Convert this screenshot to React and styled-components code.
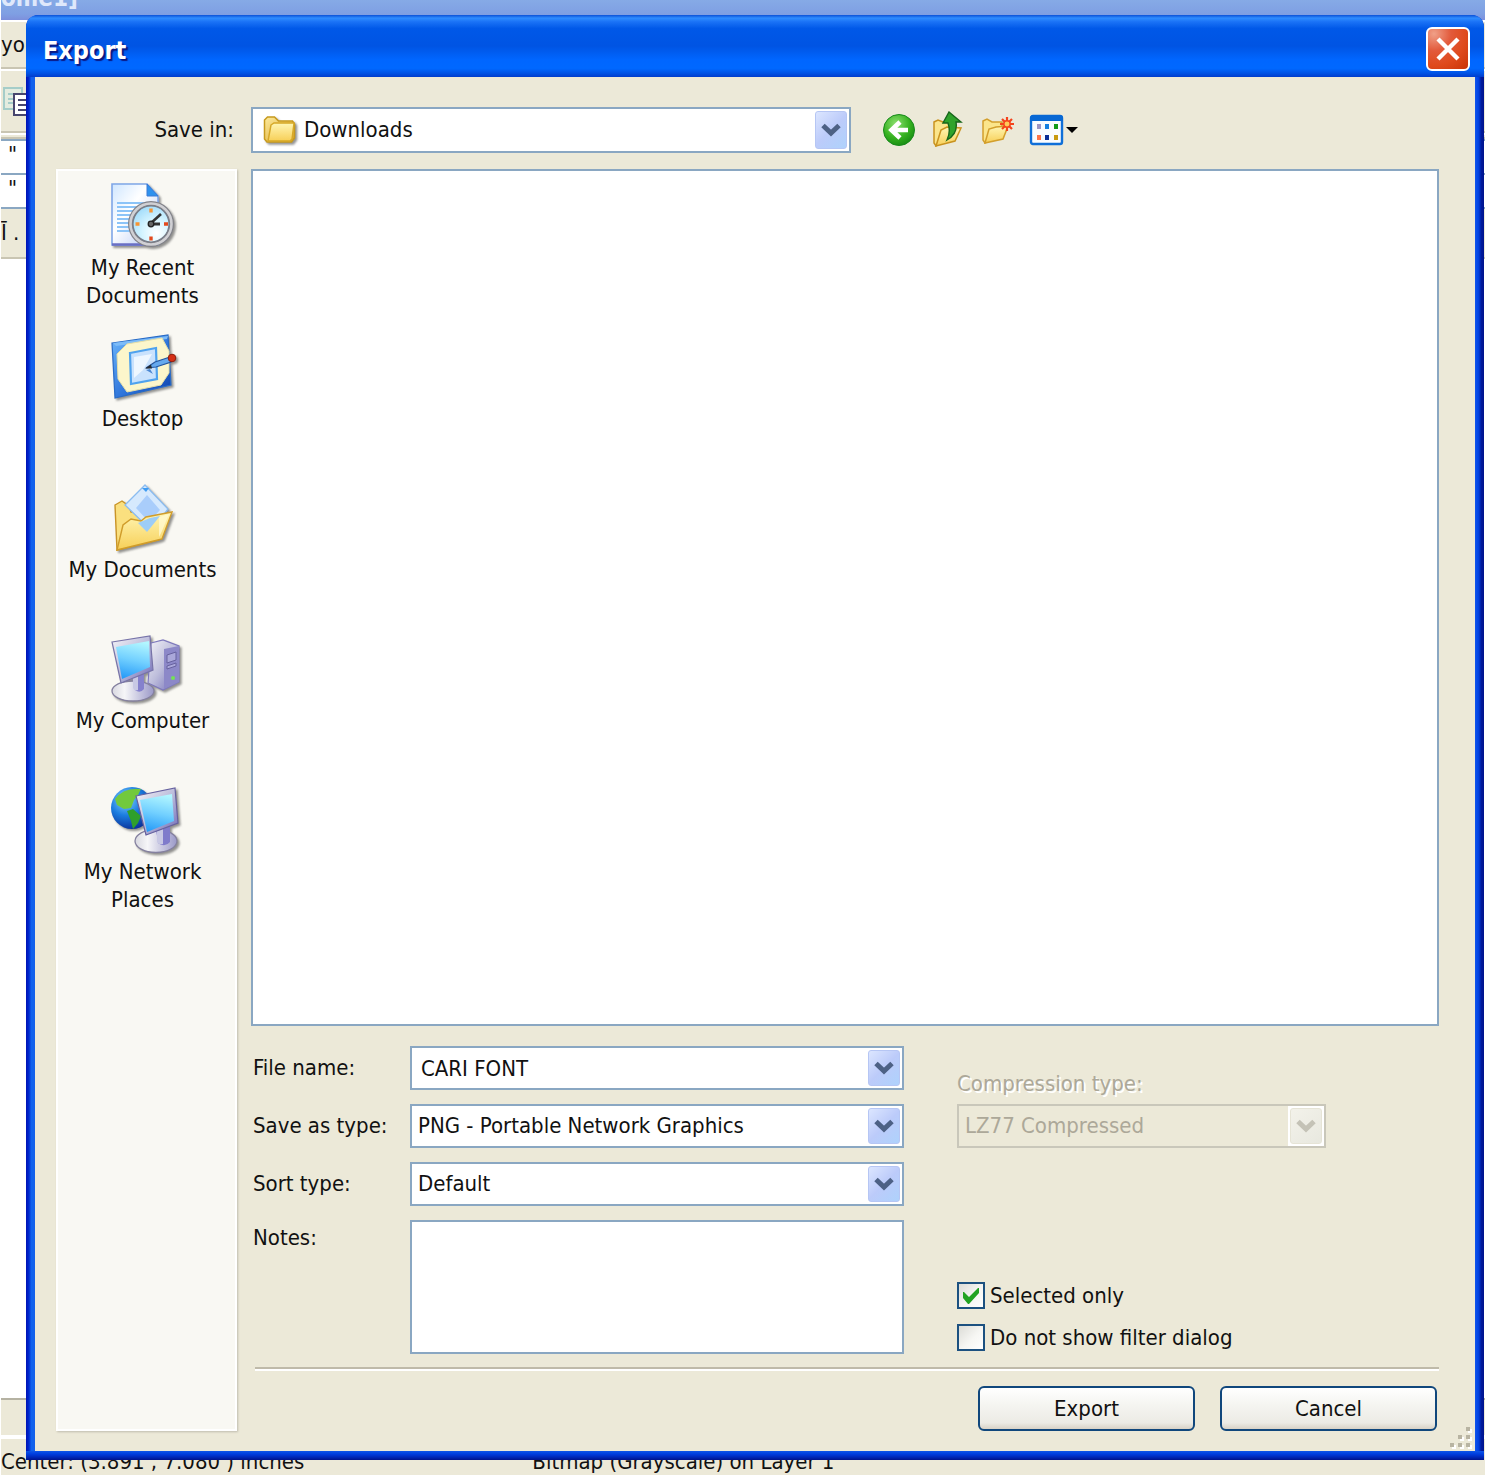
import React, { useId, useState } from "react";
import styled, { createGlobalStyle } from "styled-components";

const Global = createGlobalStyle`
  *, *::before, *::after { box-sizing: border-box; }
  body { margin: 0; background: #fff; }
  body, button, input, select, textarea {
    font-family: "DejaVu Sans Condensed", "DejaVu Sans", sans-serif;
    font-stretch: condensed;
    font-size: 22px;
    line-height: 28px;
    color: #111;
  }
`;

/* ---------- application behind the dialog ---------- */

const Desktop = styled.div`
  position: relative;
  min-height: 100vh;
  display: flex;
  flex-direction: column;
  overflow: hidden;
  padding: 0 0 2px 1px;
`;

const AppTitle = styled.div`
  flex: none;
  height: 20px;
  padding-bottom: 6px;
  display: flex;
  align-items: flex-end;
  overflow: hidden;
  background: linear-gradient(#86aae6, #7f9fe3 70%, #7d8fdc);
  color: #dfe8fb;
  font-size: 24px;
  font-weight: bold;
  line-height: 32px;
`;

const AppBar = styled.div`
  flex: none;
  height: ${(p) => p.$height}px;
  display: flex;
  align-items: center;
  overflow: hidden;
  white-space: nowrap;
  background: #ece9d8;
  border-top: 2px solid ${(p) => p.$top || "#fff"};
  border-bottom: ${(p) => p.$edge || 2}px solid ${(p) => p.$bottom || "#c9c5b2"};
`;

const AppField = styled.div`
  flex: none;
  height: 34px;
  padding-left: 7px;
  background: #fff;
  border-top: 2px solid #8aa7c2;
`;

const AppCanvas = styled.div`
  flex: 1;
  background: #fff;
`;

const StatusBar = styled.div`
  flex: none;
  height: 36px;
  display: flex;
  align-items: flex-end;
  gap: 228px;
  overflow: hidden;
  white-space: nowrap;
  line-height: 26px;
  background: #ece9d8;
`;

/* ---------- dialog frame ---------- */

const Dialog = styled.section`
  position: absolute;
  inset: 15px 1px 17px 26px;
  display: flex;
  flex-direction: column;
  padding: 0 9px 9px;
  border-radius: 12px 12px 0 0;
  background:
    linear-gradient(#0f55e6, #0040e0 30%, #0030c8 55%, #00138c) bottom / 100% 9px no-repeat,
    linear-gradient(90deg, #0012b4, #0028cf 30%, #0f62ee 60%, #1460ea) left / 9px 100% no-repeat,
    linear-gradient(90deg, #0f55ee, #0040e0 40%, #001a9c 70%, #00138c) right / 9px 100% no-repeat,
    #0040e0;
`;

const TitleBar = styled.header`
  flex: none;
  height: 62px;
  margin: 0 -9px;
  padding: 0 14px 0 17px;
  display: flex;
  align-items: center;
  justify-content: space-between;
  border-radius: 12px 12px 0 0;
  background: linear-gradient(#0a50d8, #2f8cff 5%, #1a72f6 11%, #0058e8 22%, #0054e3 50%, #0066ff 72%, #0068ff 86%, #0052e4 94%, #003ccc);
`;

const Title = styled.h1`
  margin: 0;
  padding-top: 10px;
  color: #fff;
  font-size: 25px;
  line-height: 32px;
  font-weight: bold;
  text-shadow: 2px 2px 1px #0a1883;
`;

const CloseButton = styled.button`
  width: 44px;
  height: 44px;
  margin-top: 5px;
  padding: 0;
  display: grid;
  place-items: center;
  border: 2px solid #fff;
  border-radius: 6px;
  background: radial-gradient(circle at 15% 12%, #f0a088, #e2593a 35%, #df4a1c 65%, #c93408);
`;

const Body = styled.div`
  position: relative;
  flex: 1;
  display: grid;
  grid-template-columns: 181px minmax(0, 1fr);
  grid-template-rows: 46px minmax(0, 1fr);
  gap: 16px 14px;
  padding: 30px 36px 20px 21px;
  background: #ece9d8;
`;

const SaveInLabel = styled.label`
  align-self: center;
  justify-self: end;
  padding-right: 3px;
`;

const LocationRow = styled.div`
  display: flex;
  align-items: center;
  gap: 31px;
`;

const Tools = styled.div`
  display: flex;
  gap: 15px;
`;

const ToolButton = styled.button`
  padding: 0;
  height: 38px;
  display: flex;
  align-items: center;
  border: 0;
  background: none;
`;

/* ---------- places ---------- */

const Places = styled.nav`
  display: flex;
  flex-direction: column;
  padding: 11px 8px 0 0;
  border: 2px solid #fff;
  background: #f9f8f3;
  box-shadow: 1px 1px 2px #bfbcae;
`;

const Place = styled.button`
  height: 151px;
  padding: 0;
  display: flex;
  flex-direction: column;
  align-items: center;
  gap: 4px;
  border: 0;
  background: none;
  svg { overflow: visible; }
`;

const PlaceLabel = styled.span`
  white-space: pre;
`;

/* ---------- files and form ---------- */

const Main = styled.main`
  display: flex;
  flex-direction: column;
`;

const FileList = styled.div`
  flex: 1;
  min-height: 200px;
  margin-bottom: 20px;
  border: 2px solid #8aa7c2;
  background: #fff;
`;

const Form = styled.div`
  display: grid;
  grid-template-columns: 159px minmax(0, 494px) minmax(0, 369px);
  grid-template-rows: 44px 44px 44px 134px;
  row-gap: 14px;
`;

const FieldLabel = styled.label`
  grid-column: 1;
  align-self: ${(p) => (p.$top ? "start" : "center")};
  padding: ${(p) => (p.$top ? "4px" : "0")} 0 0 2px;
  white-space: nowrap;
`;

const ComboFrame = styled.div`
  display: grid;
  grid-template-columns: minmax(0, 1fr);
  align-items: center;
  flex: ${(p) => p.$flex || "none"};
  height: ${(p) => p.$height || 44}px;
  border: 2px solid ${(p) => (p.$disabled ? "#c9c7ba" : "#8aa7c2")};
  background: ${(p) => (p.$disabled ? "#ece9d8" : "#fff")};
  & > * { grid-area: 1 / 1; }
`;

const Select = styled.select`
  appearance: none;
  width: 100%;
  height: 100%;
  padding: 0 40px 0 ${(p) => p.$indent || 6}px;
  border: 0;
  outline: 0;
  background: transparent;
  opacity: 1;
  &:disabled { color: #aca899; }
`;

const TextInput = styled.input`
  width: 100%;
  height: 100%;
  padding: 0 40px 0 9px;
  border: 0;
  outline: 0;
  background: transparent;
`;

const Arrow = styled.span`
  justify-self: end;
  align-self: stretch;
  width: 36px;
  padding: 2px;
  display: grid;
  pointer-events: none;
  background: #fff;
  & > span {
    display: grid;
    place-items: center;
    border: 1px solid ${(p) => (p.$disabled ? "#e6e4d6" : "#b6c6f4")};
    border-radius: 3px;
    background: ${(p) =>
      p.$disabled
        ? "linear-gradient(135deg, #f3f2ea, #e8e8df)"
        : "linear-gradient(135deg, #dce6ff, #bccbfa 50%, #aed2fc)"};
  }
`;

const LeadIcon = styled.span`
  justify-self: start;
  display: flex;
  padding-left: 10px;
  pointer-events: none;
`;

const Notes = styled.textarea`
  grid-column: 2;
  width: 100%;
  height: 100%;
  padding: 4px 8px;
  resize: none;
  border: 2px solid #8aa7c2;
  outline: 0;
  background: #fff;
`;

const Options = styled.div`
  grid-column: 3;
  grid-row: 1 / 5;
  display: flex;
  flex-direction: column;
  margin-left: 53px;
  margin-right: -53px;
  padding: 24px 0 3px;
`;

const DisabledLabel = styled.label`
  margin-bottom: 6px;
  color: #aca899;
  text-shadow: 2px 2px 0 #fff;
`;

const Checks = styled.div`
  margin-top: auto;
  display: flex;
  flex-direction: column;
  gap: 15px;
`;

const CheckRow = styled.label`
  display: flex;
  align-items: center;
  gap: 5px;
  height: 27px;
  white-space: nowrap;
`;

const CheckFrame = styled.span`
  display: grid;
  place-items: center;
  width: 28px;
  height: 27px;
  & > * { grid-area: 1 / 1; }
  & > svg { pointer-events: none; }
`;

const Checkbox = styled.input`
  appearance: none;
  width: 100%;
  height: 100%;
  margin: 0;
  border: 2px solid #1c5180;
  background: linear-gradient(135deg, #dcdcd7, #f6f6f3 55%, #fff);
`;

const Divider = styled.hr`
  align-self: stretch;
  height: 4px;
  margin: 13px 0 15px 4px;
  border: 0;
  border-top: 2px solid #bfbaa9;
  border-bottom: 2px solid #fff;
`;

const Actions = styled.div`
  display: flex;
  justify-content: flex-end;
  gap: 25px;
  padding-right: 2px;
`;

const ActionButton = styled.button`
  width: 217px;
  height: 45px;
  padding: 0;
  border: 2px solid #10477c;
  border-radius: 6px;
  background: linear-gradient(#fff, #f5f5f1 40%, #ecebe5 85%, #d8d2c6);
`;

const Grip = styled.svg`
  position: absolute;
  right: 1px;
  bottom: 1px;
`;

/* ---------- drawings ---------- */

const Chevron = ({ color = "#4d6185" }) => (
  <svg width="20" height="16" viewBox="0 0 20 16">
    <path d="M2 3.500l8 7.500 8-7.500" fill="none" stroke={color} strokeWidth="5" />
  </svg>
);

const shadow = { filter: "drop-shadow(2px 2px 1px rgba(60,60,60,.55))" };

const Defs = () => (
  <svg width="0" height="0" style={{ position: "absolute" }} aria-hidden="true">
    <defs>
      <linearGradient id="paper" x1="0" y1="0" x2="1" y2="1">
        <stop offset="0" stopColor="#cfe6ff" /><stop offset=".4" stopColor="#fff" /><stop offset="1" stopColor="#b3c8f5" />
      </linearGradient>
      <linearGradient id="gold" x1="0" y1="0" x2="0" y2="1">
        <stop offset="0" stopColor="#fff6b5" /><stop offset="1" stopColor="#f7cf57" />
      </linearGradient>
      <linearGradient id="goldBack" x1="0" y1="0" x2="1" y2="1">
        <stop offset="0" stopColor="#fdeb9d" /><stop offset="1" stopColor="#d9a326" />
      </linearGradient>
      <linearGradient id="blue" x1="0" y1="0" x2="1" y2="1">
        <stop offset="0" stopColor="#6cb6fb" /><stop offset=".6" stopColor="#2b70d8" /><stop offset="1" stopColor="#0b3da8" />
      </linearGradient>
      <linearGradient id="screen" x1=".6" y1="0" x2=".4" y2="1">
        <stop offset="0" stopColor="#b2f6ff" /><stop offset=".5" stopColor="#72d0ff" /><stop offset="1" stopColor="#289cf8" />
      </linearGradient>
      <linearGradient id="metal" x1="0" y1="0" x2="1" y2="1">
        <stop offset="0" stopColor="#f4f4f8" /><stop offset=".5" stopColor="#bdbddb" /><stop offset="1" stopColor="#6c66b6" />
      </linearGradient>
      <linearGradient id="base" x1="0" y1="0" x2="1" y2="0">
        <stop offset="0" stopColor="#d8d8e0" /><stop offset=".3" stopColor="#f6f6f8" /><stop offset="1" stopColor="#9a98c8" />
      </linearGradient>
      <radialGradient id="face" cx=".65" cy=".75" r=".8">
        <stop offset="0" stopColor="#fff" /><stop offset=".5" stopColor="#d4f4ff" /><stop offset="1" stopColor="#a2dcfa" />
      </radialGradient>
      <radialGradient id="globe" cx=".35" cy=".3" r=".75">
        <stop offset="0" stopColor="#8ad4ff" /><stop offset=".5" stopColor="#1b7de0" /><stop offset="1" stopColor="#0a2e96" />
      </radialGradient>
      <radialGradient id="green" cx=".4" cy=".3" r=".75">
        <stop offset="0" stopColor="#8de070" /><stop offset=".6" stopColor="#35b11f" /><stop offset="1" stopColor="#168a12" />
      </radialGradient>
    </defs>
  </svg>
);

const RecentIcon = () => (
  <svg width="66" height="68" viewBox="0 0 66 68" style={shadow}>
    <path d="M2 2h35l11 12v49H2z" fill="url(#paper)" stroke="#7fa6e8" strokeWidth="1.6" />
    <path d="M2 62.500h44" stroke="#6a6fc4" strokeWidth="2.500" />
    <path d="M37 2v12h11z" fill="#2e92ee" stroke="#3a7bd5" />
    <path d="M7 21h36M7 25h30M7 29h24M7 33h18M7 37h16M7 41h14M7 45h14M7 49h16" stroke="#8cc4f8" strokeWidth="1.8" />
    <circle cx="41" cy="42" r="23" fill="#808188" />
    <circle cx="41" cy="42" r="20.500" fill="none" stroke="#d0d0d4" strokeWidth="2.600" />
    <circle cx="41" cy="42" r="18" fill="url(#face)" stroke="#777c88" strokeWidth="1.200" />
    <path d="M41 26.500v4M25.500 42h4" stroke="#f79432" strokeWidth="3.400" />
    <path d="M41 54.500v4M54 42h4" stroke="#e34a1e" strokeWidth="3.400" />
    <path d="M38 42h12" stroke="#333" strokeWidth="3" />
    <path d="M40 42l11-10" stroke="#333" strokeWidth="2.600" />
    <circle cx="41" cy="42" r="2.800" fill="#666" stroke="#222" strokeWidth="1.300" />
  </svg>
);

const DesktopIcon = () => (
  <svg width="66" height="68" viewBox="0 0 66 68" style={shadow}>
    <path d="M2 10L58 2l3 50L5 65z" fill="url(#blue)" stroke="#2a6cc6" strokeWidth="1.200" />
    <path d="M3 10L58 3l-1 3L6 13z" fill="#7dbcf8" />
    <path d="M17 11l35-6 7 13v22l-8 12-34 7-9-13-1-25z" fill="#fcf6cb" stroke="#e6dfa8" />
    <path d="M20 20l26-5 1 31-26 5z" fill="#c9e2fd" stroke="#4fa2ee" strokeWidth="2.200" />
    <path d="M24 24l18-3-9 16-9 8z" fill="#eef7ff" />
    <path d="M36 35l9-6 15-5 1 5-15 5z" fill="#65a9ee" stroke="#24569f" strokeWidth="1.200" />
    <path d="M35 35.500l6-4 1 4z" fill="#262b30" />
    <circle cx="62" cy="25" r="3.800" fill="#d52f16" stroke="#8e1d0c" />
    <path d="M36 37l7 4-3-5z" fill="#4b87d2" />
  </svg>
);

const DocumentsIcon = () => (
  <svg width="66" height="68" viewBox="0 0 66 68" style={shadow}>
    <path d="M5 21l7-4 7 5 2 6 34 2-6 26L7 66z" fill="#fae07f" stroke="#c99427" strokeWidth="1.400" />
    <path d="M35 1l23 24-16 22-27-26z" fill="#d6e9fd" stroke="#8abcf0" strokeWidth="1.300" />
    <path d="M32 4h7l-3 4z" fill="#3f9cf2" />
    <path d="M37 11l13 15-11 12-13-14z" fill="#a9cdfb" />
    <path d="M7 66l6-25 8-6 10 2 5-4 26-5-10 27z" fill="url(#gold)" stroke="#d09c2a" strokeWidth="1.400" />
    <path d="M28 39l12-5 10-2-13 16z" fill="#9dcdf6" />
    <path d="M49 33l10-3-7 17-3 6z" fill="#fff9d0" opacity=".8" />
  </svg>
);

const ComputerIcon = () => (
  <svg width="66" height="68" viewBox="0 0 66 68" style={shadow}>
    <path d="M41 8l12-3 16 6v36l-16 8-15-7z" fill="url(#metal)" stroke="#7d78bc" strokeWidth="1.200" />
    <path d="M54 14l15-3v36l-15 7z" fill="#8c88c8" />
    <path d="M57 20l9-3v8l-9 3zM57 31l9-3v3l-9 3z" fill="#aaa8da" stroke="#67629f" />
    <circle cx="63" cy="43" r="2" fill="#74e256" />
    <ellipse cx="23" cy="56" rx="21" ry="10" fill="url(#base)" stroke="#85819f" strokeWidth="1.300" />
    <path d="M22 42l12-5v17q-4 5-9 1z" fill="#8581cd" />
    <path d="M23 43l5-2v14q-4 1-5-2z" fill="#c8c8e4" />
    <path d="M2 7l38-6 3 34-32 13z" fill="url(#metal)" stroke="#7773a8" strokeWidth="1.200" />
    <path d="M6 12l33-6 1 26-28 12z" fill="url(#screen)" />
  </svg>
);

const NetworkIcon = () => (
  <svg width="66" height="68" viewBox="0 0 66 68" style={shadow}>
    <circle cx="22" cy="22" r="21" fill="url(#globe)" />
    <path d="M5 13Q14 1 31 3l-3 6-4 5-3 8-7 1-7-4z" fill="#72c93c" />
    <path d="M17 25l6-2 8 7-3 7-5 6-2-8z" fill="#2f9f2b" />
    <ellipse cx="46" cy="55" rx="21" ry="11.500" fill="url(#base)" stroke="#85819f" strokeWidth="1.300" />
    <path d="M46 43l14-5v18q-5 6-12 1z" fill="#7f7bcb" />
    <path d="M47 45l6-2v15q-5 1-6-3z" fill="#c8c8e4" />
    <path d="M26 10l39-8 3 35-32 12z" fill="url(#metal)" stroke="#66619f" strokeWidth="1.200" />
    <path d="M30 14l32-6 2 27-27 11z" fill="url(#screen)" />
  </svg>
);

const FolderIcon = () => (
  <svg width="36" height="30" viewBox="0 0 36 30" style={shadow}>
    <path d="M1.500 5l3-3h7l4 4h14l2 3v14l-3 4H4l-2.500-3z" fill="url(#goldBack)" stroke="#c79a1e" strokeWidth="1.500" />
    <path d="M8 10l3-2h20l-2 16-2 2H5z" fill="url(#gold)" stroke="#d6a827" strokeWidth="1.400" />
  </svg>
);

const BackIcon = () => (
  <svg width="34" height="34" viewBox="0 0 34 34">
    <circle cx="17" cy="17" r="15.500" fill="url(#green)" stroke="#188a1c" />
    <path d="M26 17H10M18 9L9.500 17l8.500 8" fill="none" stroke="#fff" strokeWidth="4.600" />
  </svg>
);

const UpIcon = () => (
  <svg width="34" height="38" viewBox="0 0 34 38">
    <path d="M3 11l4-2 5 2h8v12L5 35l-2-3z" fill="#fbe58b" stroke="#c9931f" strokeWidth="1.500" />
    <path d="M5 35l5-16 6-3 14 1-6 13z" fill="url(#gold)" stroke="#c9931f" strokeWidth="1.500" />
    <path d="M18 1l12 10h-5q2 12-9 18 4-8 1-17h-5z" fill="#2fa32b" stroke="#17661b" strokeWidth="1.400" />
  </svg>
);

const NewFolderIcon = () => (
  <svg width="34" height="32" viewBox="0 0 34 32">
    <path d="M3 7l4-2 5 3h10v12L5 29l-2-3z" fill="#fbe58b" stroke="#d39f2c" strokeWidth="1.500" />
    <path d="M5 29l4-14 7-2 12-1-5 13z" fill="url(#gold)" stroke="#d39f2c" strokeWidth="1.500" />
    <path d="M27 3v14M20 10h14M22 5l10 10M32 5L22 15" stroke="#f4431c" strokeWidth="2.200" />
    <circle cx="27" cy="10" r="3.200" fill="#ffc95a" stroke="#f4431c" strokeWidth="1.500" />
  </svg>
);

const ViewIcon = () => (
  <svg width="50" height="34" viewBox="0 0 50 34">
    <rect x="2" y="3" width="31" height="28" rx="2" fill="#fafcff" stroke="#0f6fd8" strokeWidth="2.400" />
    <path d="M1 8V4l2-2h29l2 2v4z" fill="#0868d4" />
    <path fill="#9d95c4" d="M8 11h4v5H8z" /><path fill="#167fe0" d="M16 11h4v5h-4z" /><path fill="#159b19" d="M25 11h4v5h-4z" />
    <path fill="#ff7549" d="M8 22h4v5H8z" /><path fill="#0b2d95" d="M16 22h4v5h-4z" /><path fill="#c99b12" d="M25 22h4v5h-4z" />
    <path d="M37 14h12l-6 6z" />
  </svg>
);

const CopyIcon = () => (
  <svg width="30" height="32" viewBox="0 0 30 32">
    <path d="M3 3h18v21H3z" fill="#e4ecdf" stroke="#a5cdc9" strokeWidth="2" />
    <path d="M7 9h11M7 14h6M7 18h6" stroke="#a5cdc9" strokeWidth="2" />
    <path d="M13 9h16v21H13z" fill="#fff" stroke="#48466e" strokeWidth="2" />
    <path d="M17 15h9M17 20h9M17 25h9" stroke="#48466e" strokeWidth="2" />
  </svg>
);

/* ---------- parts ---------- */

function Combo({ id, options, flex, height, disabled, icon }) {
  return (
    <ComboFrame $flex={flex} $height={height} $disabled={disabled}>
      <Select id={id} disabled={disabled} $indent={icon ? 51 : 6}>
        {options.map((o) => <option key={o}>{o}</option>)}
      </Select>
      {icon && <LeadIcon>{icon}</LeadIcon>}
      <Arrow $disabled={disabled}>
        <span><Chevron color={disabled ? "#c4c2b6" : undefined} /></span>
      </Arrow>
    </ComboFrame>
  );
}

function Check({ label, initial }) {
  const id = useId();
  const [on, setOn] = useState(initial);
  return (
    <CheckRow htmlFor={id}>
      <CheckFrame>
        <Checkbox id={id} type="checkbox" checked={on} onChange={() => setOn(!on)} />
        {on && (
          <svg width="18" height="18" viewBox="0 0 18 18">
            <path d="M1 5h1l5 5 9-9h1v5L7 17H6l-5-6z" fill="#22a322" />
          </svg>
        )}
      </CheckFrame>
      {label}
    </CheckRow>
  );
}

const places = [
  ["My Recent\nDocuments", RecentIcon],
  ["Desktop", DesktopIcon],
  ["My Documents", DocumentsIcon],
  ["My Computer", ComputerIcon],
  ["My Network\nPlaces", NetworkIcon],
];

export default function App() {
  return (
    <Desktop>
      <Global />
      <Defs />
      <AppTitle>ome1]</AppTitle>
      <AppBar $height={49}>you</AppBar>
      <AppBar $height={64}><CopyIcon /></AppBar>
      <AppBar $height={6} />
      <AppField>"</AppField>
      <AppField>"</AppField>
      <AppBar $height={52} $top="#8aa7c2">Ī .</AppBar>
      <AppCanvas />
      <AppBar $height={41} $top="#b5b2a2" $bottom="#fff" $edge={4} />
      <StatusBar>
        <span>Center: (3.891 , 7.080 ) inches</span>
        <span>Bitmap (Grayscale) on Layer 1</span>
      </StatusBar>

      <Dialog role="dialog" aria-labelledby="title">
        <TitleBar>
          <Title id="title">Export</Title>
          <CloseButton aria-label="Close">
            <svg width="26" height="26" viewBox="0 0 26 26">
              <path d="M3 3l20 20M23 3L3 23" stroke="#fff" strokeWidth="4.400" />
            </svg>
          </CloseButton>
        </TitleBar>
        <Body>
          <SaveInLabel htmlFor="location">Save in:</SaveInLabel>
          <LocationRow>
            <Combo id="location" flex="0 1 600px" height={46} options={["Downloads"]} icon={<FolderIcon />} />
            <Tools>
              <ToolButton aria-label="Back"><BackIcon /></ToolButton>
              <ToolButton aria-label="Up one level"><UpIcon /></ToolButton>
              <ToolButton aria-label="New folder"><NewFolderIcon /></ToolButton>
              <ToolButton aria-label="Views"><ViewIcon /></ToolButton>
            </Tools>
          </LocationRow>

          <Places>
            {places.map(([label, Icon]) => (
              <Place key={label}>
                <Icon />
                <PlaceLabel>{label}</PlaceLabel>
              </Place>
            ))}
          </Places>

          <Main>
            <FileList />
            <Form>
              <FieldLabel htmlFor="name">File name:</FieldLabel>
              <ComboFrame>
                <TextInput id="name" defaultValue="CARI FONT" />
                <Arrow><span><Chevron /></span></Arrow>
              </ComboFrame>
              <FieldLabel htmlFor="type">Save as type:</FieldLabel>
              <Combo id="type" options={["PNG - Portable Network Graphics"]} />
              <FieldLabel htmlFor="sort">Sort type:</FieldLabel>
              <Combo id="sort" options={["Default"]} />
              <FieldLabel htmlFor="notes" $top>Notes:</FieldLabel>
              <Notes id="notes" />
              <Options>
                <DisabledLabel htmlFor="compression">Compression type:</DisabledLabel>
                <Combo id="compression" disabled options={["LZ77 Compressed"]} />
                <Checks>
                  <Check label="Selected only" initial={true} />
                  <Check label="Do not show filter dialog" initial={false} />
                </Checks>
              </Options>
            </Form>
            <Divider />
            <Actions>
              <ActionButton>Export</ActionButton>
              <ActionButton>Cancel</ActionButton>
            </Actions>
          </Main>
          <Grip width="26" height="24" viewBox="0 0 26 24" aria-hidden="true">
            {[[18, 1], [10, 9], [18, 9], [2, 17], [10, 17], [18, 17]].map(([x, y]) => (
              <g key={`${x}-${y}`}>
                <rect x={x + 2} y={y + 2} width="4" height="4" fill="#fff" />
                <rect x={x} y={y} width="4" height="4" fill="#b8b4a2" />
              </g>
            ))}
          </Grip>
        </Body>
      </Dialog>
    </Desktop>
  );
}
